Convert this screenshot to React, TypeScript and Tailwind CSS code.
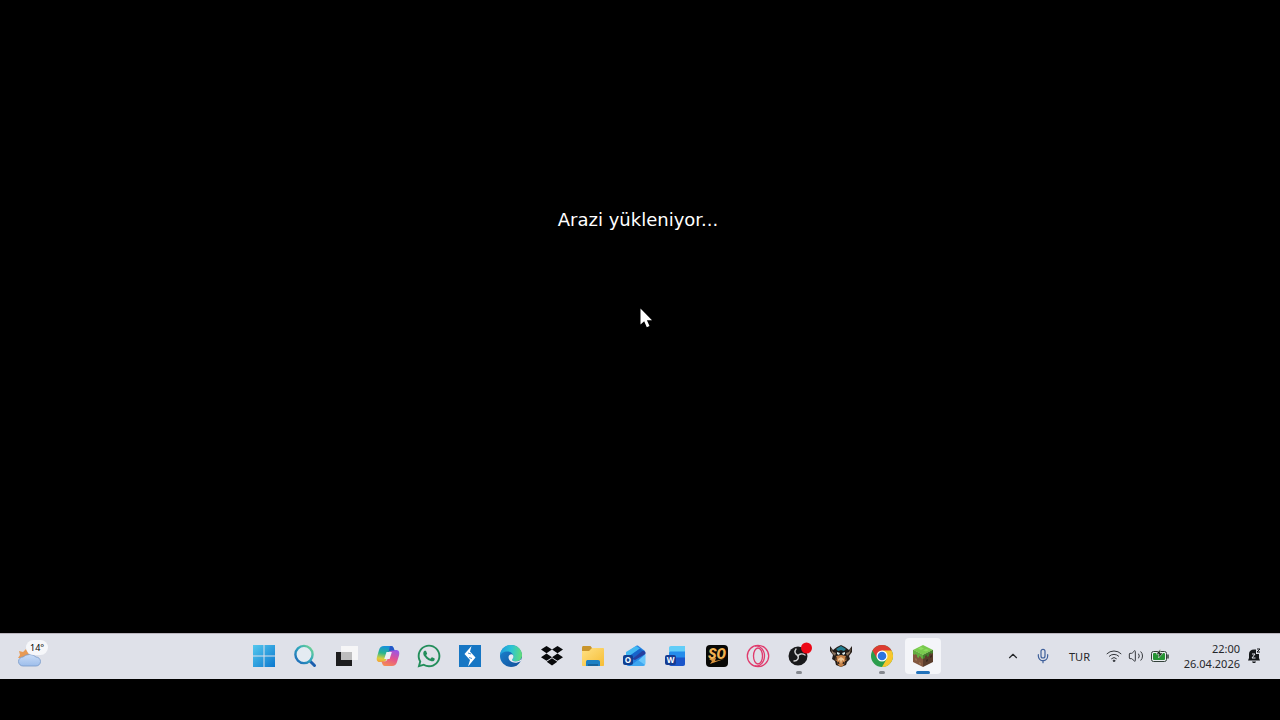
import type { ReactNode } from 'react';
import { ChevronUp, Mic, Volume2 } from 'lucide-react';
import { FaWhatsapp } from 'react-icons/fa';

interface TaskbarApp {
    name: string;
    icon: ReactNode;
    running?: boolean;
    active?: boolean;
}

function WeatherIcon() {
    return (
        <svg viewBox="0 0 26 20" className="w-[26px] h-5" aria-hidden="true">
            <defs>
                <linearGradient id="cloud" x1="0" y1="0" x2="0" y2="1">
                    <stop offset="0" stopColor="#c9dcf6" />
                    <stop offset="1" stopColor="#9dbdeb" />
                </linearGradient>
            </defs>
            <path d="M2 3l4 1 3-3 2 4 3 4-7 3-3-2-3 0 2-3z" fill="#e79a55" />
            <path d="M6 18a4.500 4.500 0 0 1 0-9 8 6 0 0 1 13 0 4.500 4.500 0 0 1 0 9z" fill="url(#cloud)" stroke="#7799c9" strokeWidth=".8" />
        </svg>
    );
}

function StartIcon() {
    return (
        <svg viewBox="0 0 22 22" className="size-[22px]" aria-hidden="true">
            <defs>
                <linearGradient id="start" x1="0" y1="0" x2="1" y2="1">
                    <stop offset="0" stopColor="#55c8ee" />
                    <stop offset="1" stopColor="#0b78cf" />
                </linearGradient>
            </defs>
            <path d="M0 0h10.500v10.500H0zM11.500 0H22v10.500H11.500zM0 11.500h10.500V22H0zM11.500 11.500H22V22H11.500z" fill="url(#start)" />
        </svg>
    );
}

function SearchIcon() {
    return (
        <svg viewBox="0 0 24 24" className="size-6" aria-hidden="true">
            <defs>
                <linearGradient id="search" x1="1" y1="0" x2="0" y2="1">
                    <stop offset="0" stopColor="#7bdc8c" />
                    <stop offset=".45" stopColor="#30a8bd" />
                    <stop offset="1" stopColor="#1b62ba" />
                </linearGradient>
            </defs>
            <path d="M16.500 16.500l5 5" stroke="#1c5fae" strokeWidth="3" strokeLinecap="round" />
            <circle cx="11" cy="10.500" r="8.600" fill="#e4ebf2" stroke="url(#search)" strokeWidth="2.400" />
        </svg>
    );
}

function TaskViewIcon() {
    return (
        <svg viewBox="0 0 24 22" className="w-6 h-[22px]" aria-hidden="true">
            <path d="M2 7h16v14H2z" fill="#1d1d1f" />
            <path d="M7 1h17v14H7z" fill="#f6f6f7" />
            <path d="M7 7h11v8H7z" fill="#bdbdbe" />
        </svg>
    );
}

function CopilotIcon() {
    return (
        <svg viewBox="0 0 24 22" className="w-6 h-[22px]" aria-hidden="true">
            <defs>
                <linearGradient id="copilotLeft" x1=".5" y1="0" x2=".3" y2="1">
                    <stop offset="0" stopColor="#168fe0" />
                    <stop offset=".45" stopColor="#27b58f" />
                    <stop offset=".8" stopColor="#d8cf3d" />
                    <stop offset="1" stopColor="#f2a83b" />
                </linearGradient>
                <linearGradient id="copilotRight" x1=".7" y1="0" x2=".3" y2="1">
                    <stop offset="0" stopColor="#9a55e6" />
                    <stop offset=".5" stopColor="#e3528f" />
                    <stop offset="1" stopColor="#f58a54" />
                </linearGradient>
            </defs>
            <path d="M8 1h7c2 0 2.500 1.500 3 3l.7 2h-3.200c-2 0-3 1-3.500 3l-1.500 5c-.6 2-1.500 3-3.500 3H3.500C.8 17 .3 14.500 1 12l2-7c.8-2.500 2.200-4 5-4z" fill="url(#copilotLeft)" />
            <path d="M16 21H9c-2 0-2.500-1.500-3-3l-.5-1.500h2.700c2 0 3-1 3.500-3l1.500-5c.6-2 1.500-3.500 3.500-3.500h3.800c2.700 0 3.200 3 2.500 5.500l-2 6.500c-.8 2.500-2.200 4-5 4z" fill="url(#copilotRight)" />
            <path d="M15 1c2 0 2.500 1.500 3 3l.5 1.500h-3c-1.500 0-2.500.7-3 2L14 1z" fill="#2456c8" />
            <path d="M10.500 7h5.300l-2.200 7H8.200z" fill="#eef0f6" />
        </svg>
    );
}

function BoltIcon() {
    return (
        <svg viewBox="0 0 22 22" className="size-[22px]" aria-hidden="true">
            <path d="M0 0h22v22H0z" fill="#1676c4" />
            <path d="M12.500 1L11 6.500l5.500 6L9 21.500l2-6.500-5.500-6z" fill="#fff" />
            <path d="M12 9l-3-1M10 12.500l3 1" stroke="#1676c4" strokeWidth=".8" />
        </svg>
    );
}

function EdgeIcon() {
    return (
        <svg viewBox="0 0 24 24" className="size-6" aria-hidden="true">
            <defs>
                <linearGradient id="edgeTop" x1="0" y1=".4" x2="1" y2=".5">
                    <stop offset="0" stopColor="#219bdc" />
                    <stop offset=".5" stopColor="#2cc4d4" />
                    <stop offset="1" stopColor="#62dd78" />
                </linearGradient>
                <linearGradient id="edgeBottom" x1="0" y1="0" x2="1" y2="1">
                    <stop offset="0" stopColor="#1b87d3" />
                    <stop offset="1" stopColor="#124c98" />
                </linearGradient>
            </defs>
            <circle cx="12" cy="12" r="11" fill="url(#edgeBottom)" />
            <path d="M1 12C1 5.500 6 1 12 1c6.500 0 11 4.800 11 10 0 4-3 6.500-6.500 6.500-2.500 0-3.500-1-3.300-2 .1-.6 1.300-1 1.300-3 0-2.500-2.500-5-6-5-3.800 0-7 2-7.500 4.500z" fill="url(#edgeTop)" />
            <path d="M14.500 12.500c0-2-2.300-3-4-1.500-1.700 1.600-1 4.500.8 6 3 2.400 7 2 10.500.2L23 14c-1.500 2.500-4 3.500-6.500 3.500-2.500 0-3.500-1-3.300-2 .1-.6 1.300-1 1.300-3z" fill="#e8edf4" />
        </svg>
    );
}

function DropboxIcon() {
    return (
        <svg viewBox="0 0 22 20" className="w-[22px] h-5" fill="#08090b" aria-hidden="true">
            <path d="M5.500 0L11 3.600 5.500 7.200 0 3.600zM16.500 0L22 3.600l-5.500 3.600L11 3.600zM5.500 7.600L11 11.200l-5.500 3.600L0 11.200zM16.500 7.600l5.500 3.600-5.500 3.600-5.500-3.600zM11 12.200l5.300 3.600L11 19.400l-5.300-3.600z" />
        </svg>
    );
}

function FolderIcon() {
    return (
        <svg viewBox="0 0 24 22" className="w-6 h-[22px]" aria-hidden="true">
            <defs>
                <linearGradient id="folder" x1="0" y1="0" x2="1" y2="1">
                    <stop offset="0" stopColor="#ffe184" />
                    <stop offset="1" stopColor="#f6bd35" />
                </linearGradient>
            </defs>
            <path d="M1 2.500C1 1.700 1.500 1 2.500 1h7L11 3v5H1z" fill="#c9952c" />
            <path d="M1 6h7l3-3h11c.7 0 1 .5 1 1v16c0 .6-.4 1-1 1H2c-.6 0-1-.4-1-1z" fill="url(#folder)" />
            <path d="M5 21v-4c0-1.400.8-2 2-2h10c1.300 0 2 .7 2 2v4z" fill="#1d80c4" />
            <path d="M7 19h10v2H7z" fill="#17649d" />
        </svg>
    );
}

function OutlookIcon() {
    return (
        <svg viewBox="0 0 24 22" className="w-6 h-[22px]" aria-hidden="true">
            <path d="M3 8L13 1c1-.6 1.500-.6 2.500 0L22 6v12c0 1.800-1 3-3 3H6c-2 0-3-1.200-3-3z" fill="#2484e4" />
            <path d="M3 7L13 1l4 2.500L5 12l-2-1z" fill="#43b8f2" />
            <path d="M5 12L17 3.500 20 6 9 14z" fill="#1764ca" />
            <path d="M9 14L20 5.500 22.500 7v2L12 15z" fill="#263f9f" />
            <path d="M22.500 9v9c0 2-1 3-3 3H9z" fill="#69c6fb" />
            <path d="M7 21l8-6 7 5-2 1z" fill="#3ea6f0" />
            <rect x="0" y="10" width="10" height="10" rx="2" fill="#103f91" />
            <text x="5" y="18" textAnchor="middle" fill="#fff" className="font-['Open_Sans',sans-serif] text-[8px] font-bold">O</text>
        </svg>
    );
}

function WordIcon() {
    return (
        <svg viewBox="0 0 22 22" className="size-[22px]" aria-hidden="true">
            <path d="M4 3c0-1.300.7-2 2-2h14v8H4z" fill="#61cdf8" />
            <path d="M4 8c0-1 1-1.500 2-1.500h14V15H4z" fill="#258ceb" />
            <path d="M4 14c0-1 1-1.500 2-1.500h14V19c0 1.300-.7 2-2 2H6c-1.300 0-2-.7-2-2z" fill="#1a55ca" />
            <rect x="0" y="10" width="11" height="10" rx="2" fill="#153b91" />
            <text x="5.500" y="18" textAnchor="middle" fill="#fff" className="font-['Open_Sans',sans-serif] text-[8px] font-bold">W</text>
        </svg>
    );
}

function SoIcon() {
    return (
        <svg viewBox="0 0 24 24" className="size-6" aria-hidden="true">
            <rect x="1" y="1" width="22" height="22" rx="4" fill="#080806" />
            <path d="M4 15l7-1-1 3 9-2-14 5 2-3z" fill="#d9943e" />
            <text x="12" y="15" textAnchor="middle" fill="#f0b252" className="font-['Roboto',sans-serif] text-[14px] font-black italic">SO</text>
        </svg>
    );
}

function OperaIcon() {
    return (
        <svg viewBox="0 0 24 24" className="size-6" fill="none" stroke="#e03a6c" strokeWidth="1.300" aria-hidden="true">
            <circle cx="12" cy="12" r="10.700" />
            <ellipse cx="12" cy="12" rx="4.500" ry="8" />
            <path d="M9 2c5-1 9.500 4 9.500 10S14 23 9 22" />
        </svg>
    );
}

function ObsIcon() {
    return (
        <svg viewBox="0 0 24 24" className="size-6 overflow-visible" aria-hidden="true">
            <circle cx="11" cy="12" r="9.500" fill="#19191b" />
            <g fill="none" stroke="#d4d4d6" strokeWidth="1.400" strokeLinecap="round">
                <path d="M9 5c-2 2.500-1 5.500 2 6.500" />
                <path d="M18 11c-3-2-6-1-7 1" />
                <path d="M7 17c3.500 0 5-2.500 4-5.500" />
            </g>
            <circle cx="19.500" cy="4" r="5.500" fill="#ec0716" />
        </svg>
    );
}

function VikingIcon() {
    return (
        <svg viewBox="0 0 24 24" className="size-6" aria-hidden="true">
            <path d="M1 2l3 4 4-3 4-2 4 2 4 3 3-4v6l-3 4 1 3-3 3-1 3-5 2-5-2-1-4-3-2 1-4-3-4z" fill="#241c17" />
            <path d="M2 4l2 4 3 1-1 3-3-3zM22 4l-2 4-3 1 1 3 3-3z" fill="#8a735e" />
            <path d="M7 5l5-3 5 3-2 2-3-1-3 1z" fill="#237e91" />
            <path d="M8 7h8l1 4-5 2-5-2z" fill="#171719" />
            <path d="M8 8l3 1-1 2-2-1zM16 8l-3 1 1 2 2-1z" fill="#d8e8e6" />
            <path d="M7 12l5-1 5 1 1 4-2 1-1 4-3 2-3-2-1-4-2-1z" fill="#c58147" />
            <path d="M9 15l3-2 3 2v2l-2-1-1 4-1-4-2 1z" fill="#f1c794" />
            <path d="M5 12l2 1v3M19 12l-2 1v3M9 18l1 2M15 18l-1 2" stroke="#292019" strokeWidth="1.200" fill="none" />
        </svg>
    );
}

function ChromeIcon() {
    return (
        <svg viewBox="0 0 24 24" className="size-6" aria-hidden="true">
            <circle cx="12" cy="12" r="11" fill="#2b9d4c" />
            <path d="M12 12L2.470 6.500A11 11 0 0 1 21.530 6.500z" fill="#dd3b31" />
            <path d="M12 6.500h9.530A11 11 0 0 1 12 23l4.760-8.250z" fill="#f8c62c" />
            <path d="M2.470 6.500L7.240 14.750 12 12V6.500z" fill="#dd3b31" />
            <circle cx="12" cy="12" r="5.500" fill="#fff" />
            <circle cx="12" cy="12" r="4.300" fill="#2d74df" />
        </svg>
    );
}

function GrassBlockIcon() {
    return (
        <svg viewBox="0 0 24 24" className="size-6" aria-hidden="true">
            <path d="M2 6l10 5v12L2 18z" fill="#83573f" />
            <path d="M12 11l10-5v12l-10 5z" fill="#5a3d2c" />
            <path d="M12 1l10 5-10 5L2 6z" fill="#79ca4e" />
            <path d="M2 6l10 5v4l-2-1v-1l-2-1v2l-2-1v-2l-2-1v1l-2-1z" fill="#63ae40" />
            <path d="M22 6l-10 5v4l2-1v-2l2-1v2l2-1v-2l2-1v1l2-1z" fill="#43802c" />
            <path d="M4 14l2 1v2l-2-1zM8 18l2 1v2l-2-1z" fill="#96704f" />
            <path d="M15 16l2-1v2l-2 1zM19 12l2-1v2l-2 1z" fill="#3c291f" />
            <path d="M10 3l3 1.500L10 6 7 4.500zM15 5l3 1-3 1.500-3-1z" fill="#8ddd5f" />
        </svg>
    );
}

function WifiIcon() {
    return (
        <svg viewBox="0 0 16 14" className="w-4 h-3.5" fill="none" stroke="#34373c" strokeLinecap="round" aria-hidden="true">
            <path d="M1 4.700a10 10 0 0 1 14 0M3.300 7.200a6.600 6.600 0 0 1 9.400 0M5.600 9.600a3.400 3.400 0 0 1 4.800 0" />
            <circle cx="8" cy="11.800" r=".8" fill="#34373c" />
        </svg>
    );
}

function BatteryIcon() {
    return (
        <svg viewBox="0 0 20 14" className="w-5 h-3.5" aria-hidden="true">
            <rect x="1.500" y="2.500" width="15" height="10" rx="2" fill="#e9edf0" stroke="#33413a" />
            <rect x="3" y="4" width="12" height="7" rx="1" fill="#259433" />
            <path d="M18 6v3" stroke="#33413a" strokeWidth="1.500" strokeLinecap="round" />
            <path d="M10.500 0L6 5h3L8.500 9 13 4h-3z" fill="#17221a" stroke="#e2ebe3" strokeWidth=".6" />
        </svg>
    );
}

function BellSnoozeIcon() {
    return (
        <svg viewBox="0 0 14 16" className="w-3.5 h-4" aria-hidden="true">
            <path d="M2 6c0-3 2-4.500 5-4.500h2V6h3v4l1 2.500H1L2 10z" fill="#15171a" />
            <path d="M5 13.500h4c-.5 2-3.500 2-4 0z" fill="#15171a" />
            <path d="M5 6h3l-3 4h3.500" fill="none" stroke="#e0e3ea" />
            <path d="M10 1h3l-3 3h3" fill="none" stroke="#15171a" />
        </svg>
    );
}

const apps: TaskbarApp[] = [
    { name: 'Başlat', icon: <StartIcon /> },
    { name: 'Ara', icon: <SearchIcon /> },
    { name: 'Görev Görünümü', icon: <TaskViewIcon /> },
    { name: 'Copilot', icon: <CopilotIcon /> },
    { name: 'WhatsApp', icon: <FaWhatsapp className="size-[26px] text-[#238e5b]" /> },
    { name: 'Bolt', icon: <BoltIcon /> },
    { name: 'Edge', icon: <EdgeIcon /> },
    { name: 'Dropbox', icon: <DropboxIcon /> },
    { name: 'Dosya Gezgini', icon: <FolderIcon /> },
    { name: 'Outlook', icon: <OutlookIcon /> },
    { name: 'Word', icon: <WordIcon /> },
    { name: 'SO', icon: <SoIcon /> },
    { name: 'Opera', icon: <OperaIcon /> },
    { name: 'OBS Studio', icon: <ObsIcon />, running: true },
    { name: 'Viking', icon: <VikingIcon /> },
    { name: 'Chrome', icon: <ChromeIcon />, running: true },
    { name: 'Minecraft', icon: <GrassBlockIcon />, active: true },
];

function AppButton({ app }: { app: TaskbarApp }) {
    return (
        <button
            type="button"
            aria-label={app.name}
            className={`relative flex items-center justify-center w-9 h-9 rounded ${app.active ? 'bg-[#f4f5f9]' : ''}`}
        >
            {app.icon}
            {app.running && <span className="absolute bottom-0 w-1.5 h-[3px] rounded-full bg-[#85888f]" />}
            {app.active && <span className="absolute bottom-0 w-3.5 h-[3px] rounded-full bg-[#2272bb]" />}
        </button>
    );
}

export default function App() {
    return (
        <div className="flex flex-col min-h-screen bg-black font-['Noto_Sans',sans-serif]">
            {/* Game window */}
            <main className="relative flex-1 pt-52 text-center">
                <p className="pr-1 font-['DejaVu_Sans',sans-serif] text-[18px] leading-6 text-white">
                    Arazi yükleniyor...
                </p>
                <svg viewBox="0 0 12 20" className="absolute left-1/2 top-[308px] w-3 h-5" aria-hidden="true">
                    <path d="M.5.500v16l3.700-3.300 2.600 6 2.700-1.200-2.600-5.800H12z" fill="#fff" />
                </svg>
            </main>

            {/* Taskbar */}
            <footer className="flex items-center justify-between h-[46px] pb-px mb-[41px] border-t border-[#b9b4bd] bg-[#dfe1e9] text-[#25272b]">
                <button type="button" aria-label="Hava durumu 14°" className="relative flex items-center w-[187px] h-full pl-[17px] pt-1">
                    <WeatherIcon />
                    <span className="absolute left-[26px] top-1.5 px-1 rounded-full bg-[#f6f7fa] text-[9px] leading-[15px] text-black">14°</span>
                </button>

                <nav className="grid grid-cols-[repeat(17,minmax(0,1fr))] justify-items-center w-[700px]">
                    {apps.map((app) => (
                        <AppButton key={app.name} app={app} />
                    ))}
                </nav>

                <div className="flex items-center w-[280px] pl-1.5 text-[11px] leading-[15px]">
                    <button type="button" aria-label="Gizli simgeler" className="mr-[15px]">
                        <ChevronUp className="size-3.5" />
                    </button>
                    <button type="button" aria-label="Mikrofon" className="mr-[18px]">
                        <Mic className="size-4 text-[#3f609b]" strokeWidth={1.8} />
                    </button>
                    <button type="button" className="mr-4">TUR</button>
                    <button type="button" aria-label="Ağ, ses ve pil" className="flex items-center gap-1.5">
                        <WifiIcon />
                        <Volume2 className="size-4 text-[#34373c]" strokeWidth={1.5} />
                        <BatteryIcon />
                    </button>
                    <button type="button" className="ml-auto mr-[7px] text-right">
                        <time className="block">22:00</time>
                        <time className="block">26.04.2026</time>
                    </button>
                    <button type="button" aria-label="Bildirimler" className="mr-[19px]">
                        <BellSnoozeIcon />
                    </button>
                </div>
            </footer>
        </div>
    );
}
